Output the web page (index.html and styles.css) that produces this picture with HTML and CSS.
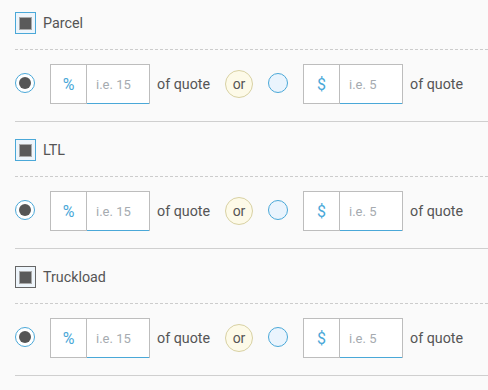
FILE: index.html
```html
<!DOCTYPE html>
<html>
<head>
<meta charset="utf-8">
<link rel="stylesheet" href="styles.css">
</head>
<body>
<div class="list">
  <section class="section">
    <div class="head">
      <span class="check"><span class="check-fill"></span></span>
      <span class="label">Parcel</span>
    </div>
    <div class="row">
      <span class="radio on"><span class="dot"></span></span>
      <div class="group"><span class="addon">%</span><input class="field" placeholder="i.e. 15"></div>
      <span class="suffix">of quote</span>
      <span class="or">or</span>
      <span class="radio off"></span>
      <div class="group"><span class="addon">$</span><input class="field" placeholder="i.e. 5"></div>
      <span class="suffix">of quote</span>
    </div>
  </section>
  <section class="section">
    <div class="head">
      <span class="check"><span class="check-fill"></span></span>
      <span class="label">LTL</span>
    </div>
    <div class="row">
      <span class="radio on"><span class="dot"></span></span>
      <div class="group"><span class="addon">%</span><input class="field" placeholder="i.e. 15"></div>
      <span class="suffix">of quote</span>
      <span class="or">or</span>
      <span class="radio off"></span>
      <div class="group"><span class="addon">$</span><input class="field" placeholder="i.e. 5"></div>
      <span class="suffix">of quote</span>
    </div>
  </section>
  <section class="section">
    <div class="head">
      <span class="check dark"><span class="check-fill"></span></span>
      <span class="label">Truckload</span>
    </div>
    <div class="row">
      <span class="radio on"><span class="dot"></span></span>
      <div class="group"><span class="addon">%</span><input class="field" placeholder="i.e. 15"></div>
      <span class="suffix">of quote</span>
      <span class="or">or</span>
      <span class="radio off"></span>
      <div class="group"><span class="addon">$</span><input class="field" placeholder="i.e. 5"></div>
      <span class="suffix">of quote</span>
    </div>
  </section>
</div>
</body>
</html>
```
FILE: styles.css
```css
html, body {
  margin: 0;
  padding: 0;
  background: #fafafa;
  font-family: Roboto, "Liberation Sans", sans-serif;
  font-size: 14px;
  color: #555;
  overflow: hidden;
}
.list {
  margin-top: -5px;
  padding-left: 15px;
}
.section {
  padding-top: 17px;
  border-bottom: 1px solid #cfcfcf;
}
.head {
  display: flex;
  align-items: center;
  gap: 7px;
  height: 22px;
  padding-bottom: 15px;
  border-bottom: 1px dashed #cccccc;
}
.check {
  box-sizing: border-box;
  width: 21px;
  height: 22px;
  border: 1px solid #4aa8d8;
  background: #eef5fb;
  display: flex;
  align-items: center;
  justify-content: center;
}
.check.dark {
  border-color: #666;
}
.check-fill {
  box-sizing: border-box;
  width: 13px;
  height: 13px;
  background: #5a5a5a;
  border: 1px solid #a9a9a9;
}
.label {
  font-size: 14.3px;
  color: #555;
}
.row {
  display: flex;
  align-items: center;
  gap: 15px;
  padding-top: 14px;
  padding-bottom: 17px;
}
.radio {
  box-sizing: border-box;
  width: 20px;
  height: 20px;
  border-radius: 50%;
  border: 1px solid #4aa8d8;
  display: flex;
  align-items: center;
  justify-content: center;
  flex: none;
  margin-top: -3px;
}
.radio.on {
  background: #fff;
}
.radio.off {
  background: #eaf4fd;
}
.dot {
  width: 12px;
  height: 12px;
  border-radius: 50%;
  background: #555;
}
.group {
  display: flex;
  height: 40px;
  box-sizing: border-box;
  border: 1px solid #bdbdbd;
  background: #fff;
  flex: none;
}
.addon {
  width: 35px;
  display: flex;
  align-items: center;
  justify-content: center;
  color: #4aa8d8;
  font-size: 16px;
  border-right: 1px solid #bdbdbd;
}
.field {
  box-sizing: border-box;
  width: 62px;
  height: 39px;
  margin: 0 0 -1px 0;
  border: 0;
  border-bottom: 1px solid #4aa8d8;
  padding: 0 0 0 9px;
  font-family: Roboto, "Liberation Sans", sans-serif;
  font-size: 13px;
  color: #555;
  background: #fff;
  outline: none;
}
.field::placeholder {
  color: #a6abb0;
}
.suffix {
  margin-left: -8px;
  width: 53px;
  font-size: 14.3px;
  white-space: nowrap;
  flex: none;
}
.or {
  box-sizing: border-box;
  width: 28px;
  height: 28px;
  border-radius: 50%;
  border: 1px solid #d8d1a3;
  background: #fdfae8;
  display: flex;
  align-items: center;
  justify-content: center;
  flex: none;
  font-size: 14px;
}
```
